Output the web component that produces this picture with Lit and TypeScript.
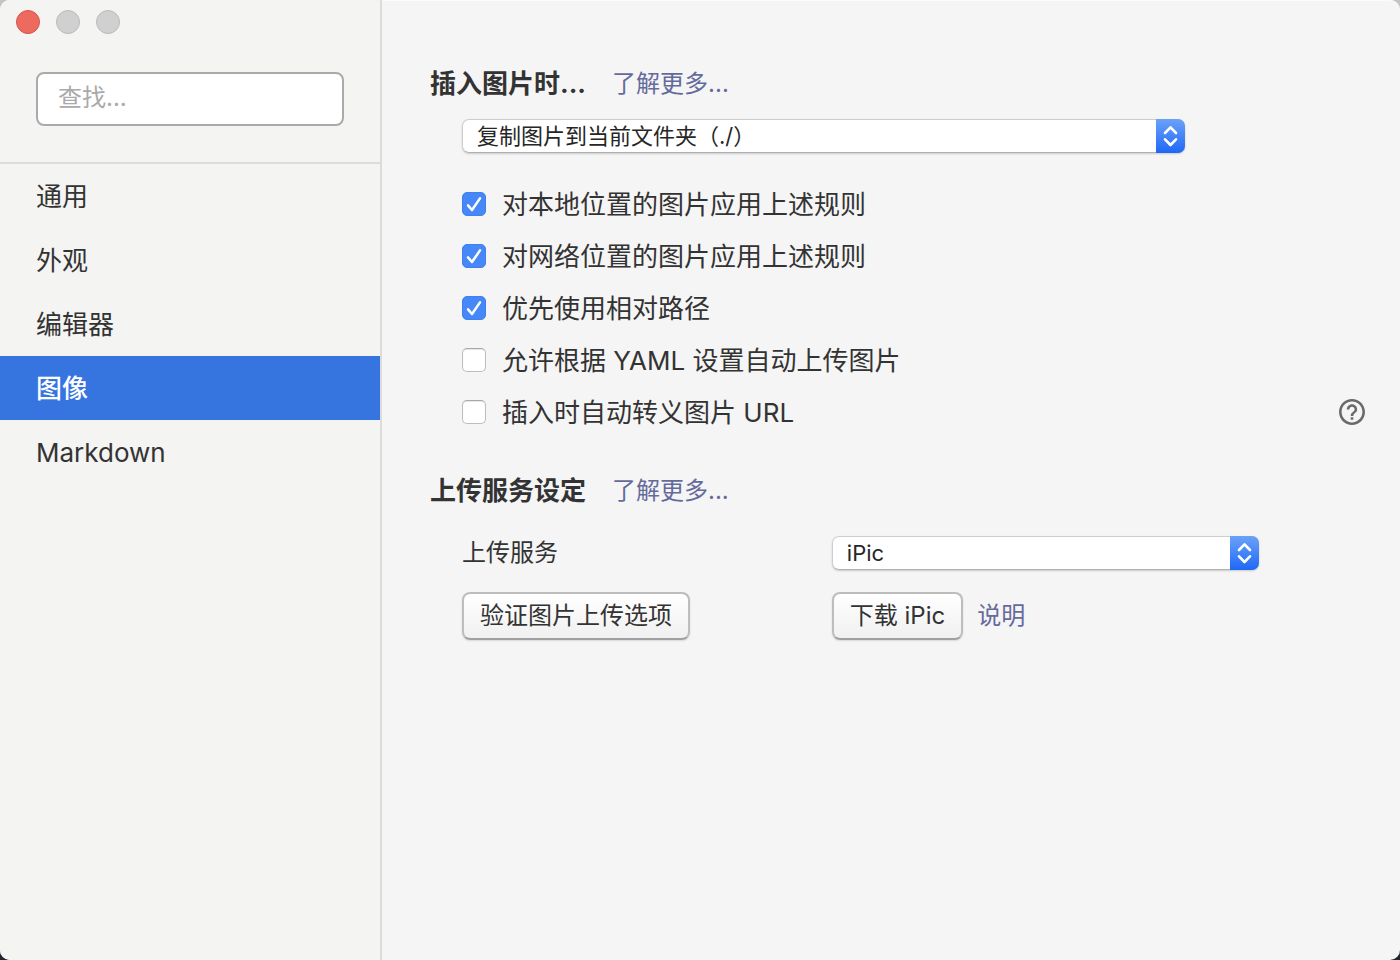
import { LitElement, html, css } from "lit";
import { customElement, property, state } from "lit/decorators.js";
import { classMap } from "lit/directives/class-map.js";

const fontStack = css`Inter, "Noto Sans CJK SC", sans-serif`;

@customElement("pop-up-select")
class PopUpSelect extends LitElement {
  @property({ type: Array }) options: string[] = [];
  @property() label = "";

  static styles = css`
    :host {
      display: block;
    }
    .box {
      display: grid;
      grid-template-columns: 1fr 29px;
      height: 34px;
      border-radius: 7px;
      box-shadow: 0 1px 2px rgba(0, 0, 0, 0.18);
    }
    .field {
      grid-area: 1 / 1 / 2 / 3;
      box-sizing: border-box;
      min-width: 0;
      height: 34px;
      margin: 0;
      padding: 0 40px 0 14px;
      appearance: none;
      border: 1px solid #cdcdcd;
      border-bottom-color: #b0b0b0;
      border-radius: 7px;
      background: #fff;
      color: #262626;
      font: 22px ${fontStack};
    }
    .arrows {
      grid-area: 1 / 2;
      display: block;
      pointer-events: none;
      z-index: 1;
      border-radius: 0 7px 7px 0;
      background: linear-gradient(#6ba2f8, #1f68f6);
    }
  `;

  render() {
    return html`
      <div class="box">
        <select class="field" aria-label=${this.label}>
          ${this.options.map((o) => html`<option>${o}</option>`)}
        </select>
        <svg class="arrows" width="29" height="34" viewBox="0 0 29 34" fill="none"
          stroke="#fff" stroke-width="2.6" stroke-linecap="round" stroke-linejoin="round" aria-hidden="true">
          <path d="M9 14l5.5-5.7L20 14M9 20.3l5.5 5.7 5.5-5.7" />
        </svg>
      </div>
    `;
  }
}

@customElement("check-row")
class CheckRow extends LitElement {
  @property() text = "";
  @property({ type: Boolean }) checked = false;

  static styles = css`
    :host {
      display: block;
    }
    .row {
      display: inline-flex;
      align-items: center;
      gap: 16px;
      height: 52px;
      color: #333;
      font: 26px/32px ${fontStack};
    }
    .text {
      padding-top: 2px;
    }
    .tick {
      display: grid;
      width: 24px;
      height: 24px;
    }
    .input {
      grid-area: 1 / 1;
      box-sizing: border-box;
      width: 24px;
      height: 24px;
      margin: 0;
      appearance: none;
      border: 1px solid #bdbdbd;
      border-top-color: #a8a8a8;
      border-radius: 5px;
      background: #fff;
      box-shadow: inset 0 1px 1px rgba(0, 0, 0, 0.1);
    }
    .input:checked {
      border-color: #4080f0;
      background: #4688f7;
      box-shadow: none;
    }
    .mark {
      grid-area: 1 / 1;
      z-index: 1;
      pointer-events: none;
      visibility: hidden;
    }
    .input:checked + .mark {
      visibility: visible;
    }
  `;

  render() {
    return html`
      <label class="row">
        <span class="tick">
          <input class="input" type="checkbox" .checked=${this.checked}
            @change=${(e: Event) => (this.checked = (e.target as HTMLInputElement).checked)} />
          <svg class="mark" width="24" height="24" viewBox="0 0 24 24" fill="none" stroke="#fff"
            stroke-width="2.5" stroke-linecap="round" stroke-linejoin="round" aria-hidden="true">
            <path d="M6 13.4l4 4.6L18 6.4" />
          </svg>
        </span>
        <span class="text">${this.text}</span>
      </label>
    `;
  }
}

@customElement("app-root")
class AppRoot extends LitElement {
  @state() private active = "图像";

  private sections = ["通用", "外观", "编辑器", "图像", "Markdown"];

  private rules = [
    { text: "对本地位置的图片应用上述规则", checked: true },
    { text: "对网络位置的图片应用上述规则", checked: true },
    { text: "优先使用相对路径", checked: true },
    { text: "允许根据 YAML 设置自动上传图片", checked: false },
    { text: "插入时自动转义图片 URL", checked: false },
  ];

  static styles = css`
    :host {
      display: block;
      background: linear-gradient(#c4c4c4 50%, #23262f 50%);
      color: #333;
      font: 24px/32px ${fontStack};
    }
    .window {
      display: flex;
      min-height: 100vh;
      border-radius: 10px;
      overflow: hidden;
      background: #f5f5f5;
      box-shadow: inset 0 1px 0 #fcfcfc;
    }
    .sidebar {
      flex: 0 0 380px;
      border-right: 2px solid #dcdcdc;
      background: #f4f4f2;
    }
    .lights {
      display: flex;
      gap: 16px;
      padding: 10px 16px 38px;
    }
    .light {
      box-sizing: border-box;
      width: 24px;
      height: 24px;
      padding: 0;
      border: 1px solid #b9b9b9;
      border-radius: 50%;
      background: #d0d0d0;
    }
    .close {
      border-color: #d9534b;
      background: #ed6a5f;
    }
    .search {
      padding: 0 36px 36px;
      border-bottom: 2px solid #dcdcdc;
    }
    .search-input {
      box-sizing: border-box;
      display: block;
      width: 100%;
      height: 54px;
      margin: 0;
      padding: 0 20px 4px;
      border: 2px solid #aaa;
      border-radius: 8px;
      background: #fff;
      color: #333;
      font: inherit;
    }
    .search-input::placeholder {
      color: #aaa;
      opacity: 1;
    }
    .item {
      box-sizing: border-box;
      display: flex;
      align-items: center;
      height: 64px;
      padding: 2px 36px 0;
      color: #333;
      font-size: 26px;
      text-decoration: none;
    }
    .selected {
      background: #3674e0;
      color: #fff;
      font-weight: 500;
    }
    .main {
      flex: 1;
      min-width: 0;
      padding: 60px 34px 60px 48px;
    }
    .heading {
      display: flex;
      align-items: center;
      gap: 26px;
      height: 48px;
    }
    .title {
      margin: 0;
      font-size: 26px;
      font-weight: 700;
    }
    .link {
      color: #656a9c;
      text-decoration: none;
    }
    .group {
      padding-left: 32px;
    }
    .insert {
      padding-top: 11px;
      padding-bottom: 29px;
    }
    .upload {
      display: grid;
      grid-template-columns: 9fr 13fr;
      align-items: center;
      row-gap: 22px;
      padding-top: 21px;
    }
    .popup {
      width: 80%;
    }
    .rules {
      padding-top: 25px;
    }
    .rule {
      display: flex;
      align-items: center;
      justify-content: space-between;
    }
    .help {
      display: block;
      width: 28px;
      height: 28px;
      padding: 1px;
      border: 0;
      background: none;
      color: #6a6a6a;
    }
    .help-icon {
      display: block;
    }
    .actions {
      display: flex;
      align-items: center;
      gap: 14px;
    }
    .button {
      box-sizing: border-box;
      height: 48px;
      margin: 0;
      padding: 0 16px;
      border: 2px solid #bdbdbd;
      border-bottom-color: #a0a0a0;
      border-radius: 8px;
      background: linear-gradient(#fff, #f0f0f0);
      box-shadow: 0 1px 2px rgba(0, 0, 0, 0.12);
      color: #333;
      font: inherit;
      white-space: nowrap;
    }
  `;

  private heading(title: string) {
    return html`
      <div class="heading">
        <h2 class="title">${title}</h2>
        <a class="link" href="#">了解更多...</a>
      </div>
    `;
  }

  private helpButton() {
    return html`
      <button class="help" aria-label="?">
        <svg class="help-icon" width="26" height="26" viewBox="2 2 20 20" fill="currentColor" aria-hidden="true">
          <path d="M11 18h2v-2h-2v2zm1-16C6.48 2 2 6.48 2 12s4.48 10 10 10 10-4.48 10-10S17.52 2 12 2zm0 18c-4.41 0-8-3.59-8-8s3.59-8 8-8 8 3.59 8 8-3.59 8-8 8zm0-14c-2.21 0-4 1.79-4 4h2c0-1.1.9-2 2-2s2 .9 2 2c0 2-3 1.75-3 5h2c0-2.25 3-2.5 3-5 0-2.21-1.79-4-4-4z" />
        </svg>
      </button>
    `;
  }

  render() {
    return html`
      <div class="window">
        <aside class="sidebar">
          <div class="lights">
            <button class="light close" aria-label="关闭"></button>
            <button class="light" aria-label="最小化"></button>
            <button class="light" aria-label="缩放"></button>
          </div>
          <div class="search">
            <input class="search-input" type="text" placeholder="查找..." aria-label="查找" />
          </div>
          <nav>
            ${this.sections.map(
              (s) => html`<a href="#" class=${classMap({ item: true, selected: s === this.active })}
                @click=${() => (this.active = s)}>${s}</a>`
            )}
          </nav>
        </aside>
        <main class="main">
          ${this.heading("插入图片时...")}
          <div class="group insert">
            <pop-up-select class="popup" label="插入图片时" .options=${["复制图片到当前文件夹（./）"]}></pop-up-select>
            <div class="rules">
              ${this.rules.map(
                (r, i) => html`<div class="rule">
                  <check-row .text=${r.text} .checked=${r.checked}></check-row>
                  ${i === this.rules.length - 1 ? this.helpButton() : ""}
                </div>`
              )}
            </div>
          </div>
          ${this.heading("上传服务设定")}
          <div class="group upload">
            <span>上传服务</span>
            <pop-up-select class="popup" label="上传服务" .options=${["iPic"]}></pop-up-select>
            <div class="actions"><button class="button">验证图片上传选项</button></div>
            <div class="actions">
              <button class="button">下载 iPic</button>
              <a class="link" href="#">说明</a>
            </div>
          </div>
        </main>
      </div>
    `;
  }
}
